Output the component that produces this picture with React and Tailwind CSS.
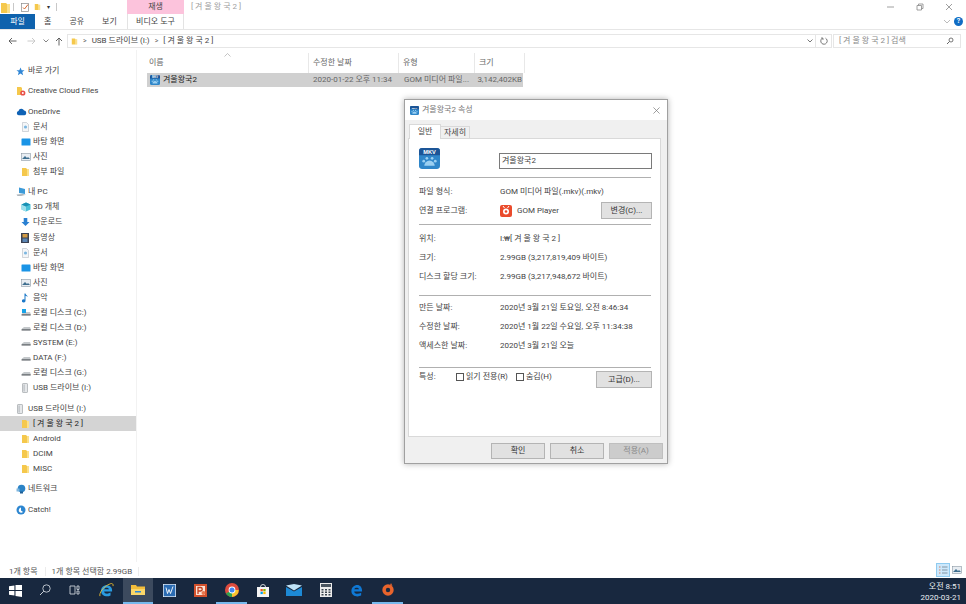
import React from 'react';

const FolderIcon = ({ className = 'w-[9px] h-[10px]' }) => (
  <svg viewBox="0 0 9 10" className={className}>
    <path d="M1 1h4l1 1v7H1z" fill="#f5c84c" />
    <path d="M6 2h2v7H6z" fill="#fbe08a" />
  </svg>
);

const DocIcon = () => (
  <svg viewBox="0 0 9 10" className="w-[9px] h-[10px]">
    <path d="M1.5.5h4l2 2v7h-6z" fill="#f4f6f8" stroke="#b5bcc4" strokeWidth=".6" />
    <circle cx="4.5" cy="5" r="1.6" fill="#7db7e0" />
  </svg>
);

const DesktopIcon = () => (
  <svg viewBox="0 0 10 8" className="w-[10px] h-[8px]">
    <rect x=".5" y=".5" width="9" height="7" rx=".6" fill="#1a94e6" />
  </svg>
);

const PictureIcon = () => (
  <svg viewBox="0 0 10 8" className="w-[10px] h-[8px]">
    <rect x=".3" y=".3" width="9.4" height="7.4" fill="#e8edf2" stroke="#7c8a96" strokeWidth=".5" />
    <path d="M1 6l3-3 2 2 1-1 2 2z" fill="#3f6f8f" />
  </svg>
);

const DriveIcon = ({ win }) => (
  <svg viewBox="0 0 10 8" className="w-[10px] h-[8px]">
    <path d="M1 4.5L3 3h6l.6 1.5V6.5H.6z" fill="#c4c8cb" />
    <path d="M.6 5.2h9v1.300h-9z" fill="#6a6e72" />
    {win && <rect x="1" y="0" width="4" height="4" fill="#18a3e8" />}
  </svg>
);

const UsbIcon = () => (
  <svg viewBox="0 0 8 10" className="w-[8px] h-[10px]">
    <rect x="1.5" y=".5" width="5" height="9" rx=".6" fill="#e6e8ea" stroke="#a0a5a9" strokeWidth=".7" />
    <rect x="2.6" y="1.5" width="1" height="7" fill="#b0b5b9" />
  </svg>
);

const MkvSmall = ({ className }) => (
  <svg viewBox="0 0 20 20" className={className}>
    <rect width="20" height="20" rx="3" fill="#2f86c9" />
    <path d="M0 7V3a3 3 0 0 1 3-3h14a3 3 0 0 1 3 3v4z" fill="#1c5597" />
    <text x="10" y="5.800" textAnchor="middle" fontSize="5.400" fontWeight="700" fill="#fff" fontFamily="Liberation Sans, sans-serif">MKV</text>
    <path d="M5 17a5 5 0 0 1 10 0z" fill="#9bd0f2" />
    <circle cx="4.500" cy="12.500" r="1.300" fill="#9bd0f2" />
    <circle cx="7.500" cy="9.800" r="1.300" fill="#9bd0f2" />
    <circle cx="12.500" cy="9.800" r="1.300" fill="#9bd0f2" />
    <circle cx="15.500" cy="12.500" r="1.300" fill="#9bd0f2" />
  </svg>
);

const StarIcon = () => (
  <svg viewBox="0 0 10 10" className="w-[9px] h-[9px]">
    <path d="M5 .5l1.300 3h3.200L7 5.600l.9 3.600L5 7.300 2.100 9.200 3 5.600.5 3.500h3.200z" fill="#2f86d6" />
  </svg>
);

const CloudIcon = () => (
  <svg viewBox="0 0 12 8" className="w-[11px] h-[8px]">
    <path d="M3 7.500a2.400 2.400 0 0 1-.3-4.700A3.300 3.300 0 0 1 8.800 2.400 2.600 2.600 0 0 1 9.300 7.500z" fill="#0f62b5" />
  </svg>
);

const CcIcon = () => (
  <svg viewBox="0 0 10 10" className="w-[10px] h-[10px]">
    <path d="M1 1h4l1 1v7H1z" fill="#f5c84c" />
    <circle cx="6.800" cy="7" r="2.600" fill="#e8504a" />
    <circle cx="6.800" cy="7" r="1" fill="#fff" />
  </svg>
);

const PcIcon = () => (
  <svg viewBox="0 0 11 10" className="w-[11px] h-[10px]">
    <path d="M3 .5l6 1.500v5L3 6z" fill="#3c9ad8" />
    <path d="M.5 7.500l6-.5 3.500.8-5 1.200H1.500z" fill="#aeb6bc" />
  </svg>
);

const CubeIcon = () => (
  <svg viewBox="0 0 10 10" className="w-[10px] h-[10px]">
    <path d="M5 .5l4.500 2v5L5 9.500.5 7.500v-5z" fill="#49c0d8" />
    <path d="M5 4.500v5L.5 7.500v-5z" fill="#9fe0ec" />
    <path d="M5 4.500L.5 2.500 5 .5l4.500 2z" fill="#1b91b5" />
  </svg>
);

const DownIcon = () => (
  <svg viewBox="0 0 10 10" className="w-[9px] h-[10px]">
    <path d="M3 .5h4V5h2.500L5 9.500.5 5H3z" fill="#2a80d2" />
  </svg>
);

const VideoIcon = () => (
  <svg viewBox="0 0 8 10" className="w-[8px] h-[10px]">
    <rect width="8" height="10" fill="#3b4252" />
    <rect x="1.500" y="1" width="5" height="3.500" fill="#d29b45" />
    <rect x="1.500" y="5.500" width="5" height="3.500" fill="#5b86b5" />
  </svg>
);

const MusicIcon = () => (
  <svg viewBox="0 0 8 10" className="w-[8px] h-[10px]">
    <path d="M3.500 .5h1c.2 1.500 2 2 2.500 3.500-.8-.8-1.600-1-2.500-1.200V7.800A1.800 1.600 0 1 1 3.500 6.500z" fill="#1b78c8" />
  </svg>
);

const NetIcon = () => (
  <svg viewBox="0 0 10 10" className="w-[10px] h-[10px]">
    <circle cx="5.500" cy="4.500" r="3.800" fill="#2b83c6" />
    <path d="M.5 4.500h3v3h-3z" fill="#7fb6de" />
    <path d="M4 7.500h3v2H4z" fill="#1f5f96" />
  </svg>
);

const CatchIcon = () => (
  <svg viewBox="0 0 10 10" className="w-[10px] h-[10px]">
    <circle cx="5" cy="5" r="4.500" fill="#2d86d0" />
    <path d="M5 2.500v3l2 1.500A2.600 2.600 0 0 1 3 6.500 3 3 0 0 1 5 2.500z" fill="#fff" />
  </svg>
);

const sidebarGroups = [
  [{ label: '바로 가기', icon: <StarIcon /> }],
  [{ label: 'Creative Cloud Files', icon: <CcIcon /> }],
  [
    { label: 'OneDrive', icon: <CloudIcon /> },
    { label: '문서', icon: <DocIcon />, child: true },
    { label: '바탕 화면', icon: <DesktopIcon />, child: true },
    { label: '사진', icon: <PictureIcon />, child: true },
    { label: '첨부 파일', icon: <FolderIcon />, child: true },
  ],
  [
    { label: '내 PC', icon: <PcIcon /> },
    { label: '3D 개체', icon: <CubeIcon />, child: true },
    { label: '다운로드', icon: <DownIcon />, child: true },
    { label: '동영상', icon: <VideoIcon />, child: true },
    { label: '문서', icon: <DocIcon />, child: true },
    { label: '바탕 화면', icon: <DesktopIcon />, child: true },
    { label: '사진', icon: <PictureIcon />, child: true },
    { label: '음악', icon: <MusicIcon />, child: true },
    { label: '로컬 디스크 (C:)', icon: <DriveIcon win />, child: true },
    { label: '로컬 디스크 (D:)', icon: <DriveIcon />, child: true },
    { label: 'SYSTEM (E:)', icon: <DriveIcon />, child: true },
    { label: 'DATA (F:)', icon: <DriveIcon />, child: true },
    { label: '로컬 디스크 (G:)', icon: <DriveIcon />, child: true },
    { label: 'USB 드라이브 (I:)', icon: <UsbIcon />, child: true },
  ],
  [
    { label: 'USB 드라이브 (I:)', icon: <UsbIcon /> },
    { label: '[ 겨 울 왕 국 2 ]', icon: <FolderIcon />, child: true, selected: true },
    { label: 'Android', icon: <FolderIcon />, child: true },
    { label: 'DCIM', icon: <FolderIcon />, child: true },
    { label: 'MISC', icon: <FolderIcon />, child: true },
  ],
  [{ label: '네트워크', icon: <NetIcon /> }],
  [{ label: 'Catch!', icon: <CatchIcon /> }],
];

const SidebarRow = ({ item }) => (
  <div className={`h-[15.1px] flex items-center ${item.child ? 'pl-[21px]' : 'pl-[16px]'} ${item.selected ? 'bg-[#d4d4d4] text-[#222]' : ''}`}>
    <span className="w-[12px] flex justify-start shrink-0">{item.icon}</span>
    <span className="whitespace-nowrap">{item.label}</span>
  </div>
);

const Sidebar = () => (
  <aside className="w-[137px] shrink-0 border-r border-[#f2f2f2] pt-[13.5px] flex flex-col gap-[5.2px]">
    {sidebarGroups.map((group, i) => (
      <div key={i}>
        {group.map((item, j) => <SidebarRow key={j} item={item} />)}
      </div>
    ))}
  </aside>
);

const TitleBar = () => (
  <div className="h-[14px] flex items-start shrink-0">
    <div className="flex items-center h-[14px] pl-[1px] w-[127px]">
      <svg viewBox="0 0 9 11" className="w-[9px] h-[11px]"><path d="M0 1h5l1 1v9H0z" fill="#f5c84c" /><path d="M6 2h3v9H6z" fill="#fbe08a" /></svg>
      <div className="w-px h-[8px] bg-[#c8c8c8] ml-[3px]" />
      <svg viewBox="0 0 8 9" className="w-[8px] h-[9px] ml-[7px]"><rect x=".5" y=".5" width="7" height="8" fill="#fff" stroke="#8a8a8a" strokeWidth=".7" /><path d="M2 4.500l1.500 1.500L7 1.500" fill="none" stroke="#d8672b" /></svg>
      <FolderIcon className="w-[7px] h-[10px] ml-[5px]" />
      <span className="ml-[6px] text-[6px] text-[#333]">▾</span>
      <div className="w-px h-[8px] bg-[#c8c8c8] ml-[6px]" />
    </div>
    <div className="w-[57px] h-[14px] bg-[#fcc3dc] flex items-center justify-center text-[#444] shrink-0">재생</div>
    <div className="ml-[7px] h-[14px] flex items-center text-[#a0a0a0] whitespace-nowrap">[ 겨 울 왕 국 2 ]</div>
    <div className="ml-auto h-[14px] flex items-center text-[#777]">
      <svg viewBox="0 0 8 8" className="w-[8px] h-[8px]"><path d="M0 4h7" stroke="#888" strokeWidth=".8" /></svg>
      <svg viewBox="0 0 8 8" className="w-[8px] h-[8px] ml-[21px]"><path d="M1 2.500h4.500V7H1zM2.500 2.500V1H7v4.500H5.500" fill="none" stroke="#888" strokeWidth=".8" /></svg>
      <svg viewBox="0 0 8 8" className="w-[8px] h-[8px] ml-[21px] mr-[13px]"><path d="M1 1l6 6M7 1L1 7" stroke="#888" strokeWidth=".8" /></svg>
    </div>
  </div>
);

const Ribbon = () => (
  <div className="h-[16px] flex items-stretch border-b border-[#e6e6e6] shrink-0">
    <div className="w-[35px] h-[15px] bg-[#0f62ad] text-white flex items-center justify-center">파일</div>
    <div className="w-[92px] flex items-center pl-[9px] gap-[18px] text-[#444]">
      <span>홈</span><span>공유</span><span>보기</span>
    </div>
    <div className="w-[57px] bg-white border-x border-[#e3e3e3] flex items-center justify-center text-[#444] whitespace-nowrap">비디오 도구</div>
    <div className="ml-auto flex items-center pr-[2px]">
      <svg viewBox="0 0 8 5" className="w-[8px] h-[5px]"><path d="M1 1l3 3 3-3" fill="none" stroke="#aaa" strokeWidth=".8" /></svg>
      <div className="ml-[3px] mr-[1px] w-[9px] h-[9px] rounded-full bg-[#0f6cc4] text-white text-[7px] leading-[9px] text-center font-bold">?</div>
    </div>
  </div>
);

const NavBar = () => (
  <div className="h-[20px] pt-[4px] flex items-start shrink-0">
    <div className="w-[67px] h-[14px] flex items-center pl-[8px]">
      <svg viewBox="0 0 9 8" className="w-[9px] h-[8px]"><path d="M8.500 4H1M4 1L1 4l3 3" fill="none" stroke="#555" strokeWidth=".9" /></svg>
      <svg viewBox="0 0 9 8" className="w-[9px] h-[8px] ml-[10px]"><path d="M.5 4H8M5 1l3 3-3 3" fill="none" stroke="#c4c4c4" strokeWidth=".9" /></svg>
      <svg viewBox="0 0 6 4" className="w-[6px] h-[4px] ml-[7px]"><path d="M.5.5L3 3 5.500.5" fill="none" stroke="#666" strokeWidth=".8" /></svg>
      <svg viewBox="0 0 8 9" className="w-[8px] h-[9px] ml-[6px]"><path d="M4 8.500V1M1 4l3-3 3 3" fill="none" stroke="#555" strokeWidth=".9" /></svg>
    </div>
    <div className="w-[749px] h-[14px] border border-[#e6e6e6] flex items-center pl-[3px]">
      <FolderIcon className="w-[7px] h-[9px]" />
      <span className="ml-[5px] text-[#666] text-[7px]">&gt;</span>
      <span className="ml-[5px] whitespace-nowrap">USB 드라이브 (I:)</span>
      <span className="ml-[5px] text-[#666] text-[7px]">&gt;</span>
      <span className="ml-[5px] whitespace-nowrap">[ 겨 울 왕 국 2 ]</span>
      <svg viewBox="0 0 6 4" className="w-[6px] h-[4px] ml-auto mr-[2px]"><path d="M.5.5L3 3 5.500.5" fill="none" stroke="#555" strokeWidth=".8" /></svg>
    </div>
    <div className="w-[16px] h-[14px] border-y border-r border-[#e6e6e6] flex items-center justify-center">
      <svg viewBox="0 0 8 8" className="w-[8px] h-[8px]"><path d="M2 1.500A3.200 3.200 0 1 0 5.500 1.200M2 .2v1.800h1.800" fill="none" stroke="#555" strokeWidth=".8" /></svg>
    </div>
    <div className="w-[128px] h-[14px] border border-[#e6e6e6] ml-[1px] flex items-center pl-[5px] pr-[6px] text-[#8a8a8a]">
      <span className="whitespace-nowrap">[ 겨 울 왕 국 2 ] 검색</span>
      <svg viewBox="0 0 8 8" className="w-[8px] h-[8px] ml-auto"><circle cx="5" cy="3" r="2" fill="none" stroke="#555" strokeWidth=".8" /><path d="M3.500 4.500L1 7" stroke="#555" strokeWidth=".9" /></svg>
    </div>
  </div>
);

const columns = [
  { label: '이름', cls: 'w-[162px] pl-[2px]' },
  { label: '수정한 날짜', cls: 'w-[90px] pl-[4px]' },
  { label: '유형', cls: 'w-[76px] pl-[4px]' },
  { label: '크기', cls: 'w-[50px] pl-[4px]' },
];

const FileList = () => (
  <div className="flex-1 pl-[10px] relative">
    <div className="h-[23px] flex items-stretch text-[#666]">
      {columns.map((col) => (
        <div key={col.label} className={`${col.cls} mt-[3px] border-r border-[#e8e8e8] flex items-center`}>
          <span>{col.label}</span>
        </div>
      ))}
    </div>
    <svg viewBox="0 0 7 4" className="w-[7px] h-[4px] absolute left-[87px] top-[3px]"><path d="M.5 3.500L3.500 .5l3 3" fill="none" stroke="#aaa" strokeWidth=".7" /></svg>
    <div className="w-[376px] h-[14px] bg-[#d0d0d0] flex items-center">
      <div className="w-[162px] flex items-center pl-[3px] text-[#222]">
        <MkvSmall className="w-[10px] h-[10px] mr-[3px]" />
        <span>겨울왕국2</span>
      </div>
      <div className="w-[90px] pl-[4px] text-[#666] whitespace-nowrap">2020-01-22 오후 11:34</div>
      <div className="w-[76px] pl-[5px] text-[#666] whitespace-nowrap">GOM 미디어 파일...</div>
      <div className="w-[47px] text-right text-[#666]">3,142,402KB</div>
    </div>
  </div>
);

const StatusBar = () => (
  <div className="h-[16px] flex items-center pl-[9px] text-[#555] shrink-0">
    <div className="flex items-center mt-[3px]">
      <span className="whitespace-nowrap">1개 항목</span>
      <div className="w-px h-[9px] bg-[#ececec] ml-[7px]" />
      <span className="ml-[6px] whitespace-nowrap">1개 항목 선택함 2.99GB</span>
      <div className="w-px h-[9px] bg-[#ececec] ml-[6px]" />
    </div>
    <div className="ml-auto flex items-center mr-[2px]">
      <div className="w-[14px] h-[14px] bg-[#cde8fb] border border-[#8fcbf0] flex items-center justify-center">
        <svg viewBox="0 0 10 10" className="w-[10px] h-[10px]"><path d="M1 2h1.500M1 5h1.500M1 8h1.500" stroke="#d0806a" strokeWidth="1.200" /><path d="M4 2h5.500M4 5h5.500M4 8h5.500" stroke="#7a8c9a" strokeWidth=".9" /></svg>
      </div>
      <div className="w-[14px] h-[14px] flex items-center justify-center">
        <PictureIcon />
      </div>
    </div>
  </div>
);

const taskbarIcons = [
  { w: 'w-[30px]', icon: <svg viewBox="0 0 12 12" className="w-[13px] h-[13px]"><path d="M6 1v4.500H12V1zM0 2v3.500h5V1.300zM0 6.500V10l5 .7V6.500zM6 6.500v4.500l6 .9V6.500z" fill="#fff" /></svg> },
  { w: 'w-[30px]', icon: <svg viewBox="0 0 12 12" className="w-[12px] h-[12px]"><circle cx="7.500" cy="4.500" r="3.700" fill="none" stroke="#c9d0d8" strokeWidth=".9" /><path d="M4.800 7.200L1 11" stroke="#c9d0d8" /></svg> },
  { w: 'w-[30px]', icon: <svg viewBox="0 0 12 12" className="w-[12px] h-[12px]"><path d="M1 2h5v8H1zM8 2h2v3.500H8zM8 7h2v3H8z" fill="none" stroke="#c9d0d8" strokeWidth=".9" /></svg> },
  { w: 'w-[33px]', icon: <svg viewBox="0 0 16 16" className="w-[15px] h-[15px]"><path d="M14 9H5.500c.2 2.500 3.800 3.200 6.800 1.200v3c-4 2-9.500.8-10-4.200C1.900 5 4.500 2.500 8 2.500c4 0 6.300 2.500 6 6.500zM5.500 6.700h5.200C10.500 4.500 6 4.300 5.500 6.700z" fill="#2a9be0" /><path d="M1 14C0 11 4 4 12 .8c2-.7 3.500.2 3 2.500" fill="none" stroke="#f4c430" strokeWidth=".9" /></svg> },
  { w: 'w-[30px]', active: true, running: true, icon: <svg viewBox="0 0 14 12" className="w-[14px] h-[12px]"><path d="M0 1h5l1 1.500h8V11H0z" fill="#f3bd3a" /><path d="M0 5h14v6H0z" fill="#fbd769" /><path d="M4 7h6v1.500H4z" fill="#2b88d8" /></svg> },
  { w: 'w-[32px]', icon: <svg viewBox="0 0 13 13" className="w-[13px] h-[13px]"><rect width="13" height="13" fill="#e8eff6" /><rect x=".7" y=".7" width="11.600" height="11.600" fill="#2b6cb3" /><path d="M3 3.500l1.500 6 1.500-4 1.500 4 2.500-7" fill="none" stroke="#fff" strokeWidth=".9" /></svg> },
  { w: 'w-[31px]', icon: <svg viewBox="0 0 13 13" className="w-[13px] h-[13px]"><rect width="13" height="13" fill="#d2512d" /><rect x="2" y="2" width="9" height="9" fill="#fbe3d6" /><path d="M4 10V3.500h2.500a1.700 1.700 0 0 1 0 3.500H4" fill="none" stroke="#c43e1c" strokeWidth="1.300" /><circle cx="9.500" cy="9" r="2" fill="#e9784f" /></svg> },
  { w: 'w-[31px]', running: true, icon: <svg viewBox="0 0 14 14" className="w-[14px] h-[14px]"><circle cx="7" cy="7" r="7" fill="#dd4b3e" /><path d="M7 7L1 10.500A7 7 0 0 0 7 14z" fill="#2ea44f" /><path d="M7 7h6.700A7 7 0 0 1 7 14z" fill="#f7c32e" /><circle cx="7" cy="7" r="3.400" fill="#fff" /><circle cx="7" cy="7" r="2.500" fill="#4285f4" /></svg> },
  { w: 'w-[31px]', icon: <svg viewBox="0 0 14 14" className="w-[14px] h-[14px]"><path d="M4.500 4a2.500 2.500 0 0 1 5 0" fill="none" stroke="#e8e8e8" strokeWidth=".9" /><rect x="1" y="4" width="12" height="10" fill="#f5f5f5" /><rect x="4.500" y="6" width="2.300" height="2.300" fill="#f25022" /><rect x="7.300" y="6" width="2.300" height="2.300" fill="#7fba00" /><rect x="4.500" y="8.800" width="2.300" height="2.300" fill="#00a4ef" /><rect x="7.300" y="8.800" width="2.300" height="2.300" fill="#ffb900" /></svg> },
  { w: 'w-[32px]', icon: <svg viewBox="0 0 16 12" className="w-[16px] h-[12px]"><path d="M0 3l8 4.500L16 3v9H0z" fill="#1d8ad6" /><path d="M0 1.500L8 0l8 1.500L8 6.500z" fill="#bfe3f8" /></svg> },
  { w: 'w-[31px]', icon: <svg viewBox="0 0 12 14" className="w-[12px] h-[14px]"><rect width="12" height="14" fill="#ececec" /><rect x="1" y="1" width="10" height="3" fill="#4a5560" /><path d="M1.500 6h2v1.500h-2zM5 6h2v1.500H5zM8.500 6h2v1.500h-2zM1.500 8.500h2V10h-2zM5 8.500h2V10H5zM8.500 8.500h2V10h-2zM1.500 11h2v1.500h-2zM5 11h2v1.500H5zM8.500 11h2v1.500h-2z" fill="#39434d" /></svg> },
  { w: 'w-[31px]', icon: <svg viewBox="0 0 14 14" className="w-[13px] h-[13px]"><path d="M13 8H4.500c.2 2.700 4 3.300 7.500 1.500v3C7.500 14.500 1.500 13 1.500 7.500 1.500 3.500 4.500 1 7.800 1 11 1 13.200 3.500 13 8zM4.700 5.700h5C9.500 3.600 5.200 3.400 4.700 5.700z" fill="#0f78d4" /></svg> },
  { w: 'w-[31px]', running: true, icon: <svg viewBox="0 0 14 14" className="w-[14px] h-[14px]"><circle cx="7" cy="7" r="5.700" fill="#e8642c" /><circle cx="7" cy="7" r="2.200" fill="#1a2a40" /><path d="M10 0l1.500 3-2.500-.8z" fill="#e8642c" /></svg> },
];

const Taskbar = () => (
  <div className="h-[26px] bg-[#18283f] flex items-stretch shrink-0 text-white">
    {taskbarIcons.map((item, i) => (
      <div
        key={i}
        className={`${item.w} ${item.active ? 'bg-[#3c4a5e]' : ''} h-full flex items-center justify-center border-b-2 ${item.running ? 'border-[#76b9ed]' : 'border-transparent'}`}
      >
        {item.icon}
      </div>
    ))}
    <div className="ml-auto flex flex-col items-end justify-center pt-[2px] pr-[5px] leading-[11px] text-[#e8edf2]">
      <span className="whitespace-nowrap">오전 8:51</span>
      <span className="whitespace-nowrap">2020-03-21</span>
    </div>
  </div>
);

const Hr = ({ className = '' }) => <div className={`h-px bg-[#b0b0b0] mr-[1px] ${className}`} />;

const InfoRow = ({ label, children, className = '' }) => (
  <div className={`flex items-center h-[19px] ${className}`}>
    <span className="w-[81px] shrink-0 whitespace-nowrap">{label}</span>
    <span className="whitespace-nowrap">{children}</span>
  </div>
);

const WinButton = ({ children, className = '' }) => (
  <button className={`h-[17px] bg-[#e1e1e1] border border-[#b4b4b4] text-[8px] text-[#333] flex items-center justify-center ${className}`}>
    {children}
  </button>
);

const Checkbox = ({ label, className = '' }) => (
  <label className={`flex items-center ${className}`}>
    <span className="w-[8px] h-[8px] bg-white border border-[#555] mr-[2px]" />
    <span className="whitespace-nowrap">{label}</span>
  </label>
);

const PropertiesDialog = () => (
  <div className="absolute left-[404px] top-[99px] w-[264px] h-[365px] bg-[#f0f0f0] border border-[#a0a0a0] shadow-[0_0_6px_rgba(0,0,0,0.3)] flex flex-col text-[#444]">
    <div className="h-[20px] bg-white flex items-center pl-[5px] pr-[7px] shrink-0">
      <MkvSmall className="w-[9px] h-[9px] mr-[3px]" />
      <span className="text-[#777]">겨울왕국2 속성</span>
      <svg viewBox="0 0 8 8" className="w-[7px] h-[7px] ml-auto"><path d="M.5.5l7 7M7.500.5l-7 7" stroke="#777" strokeWidth=".8" /></svg>
    </div>
    <div className="flex items-end h-[18px] pl-[4px] shrink-0">
      <div className="w-[32px] h-[15px] bg-white border-x border-t border-[#d9d9d9] flex items-center justify-center relative top-px z-10">일반</div>
      <div className="w-[29px] h-[12px] bg-[#f0f0f0] border-r border-t border-[#d9d9d9] flex items-center justify-center">자세히</div>
    </div>
    <div className="ml-[3px] w-[253px] h-[299px] bg-white border border-[#d9d9d9] pl-[10px] pr-[8px] shrink-0">
      <div className="flex items-start h-[38px] pt-[9px]">
        <MkvSmall className="w-[21px] h-[21px]" />
        <div className="ml-[59px] mt-[5px] w-[153px] h-[16px] border border-[#7a7a7a] flex items-center pl-[2px]">겨울왕국2</div>
      </div>
      <Hr />
      <InfoRow label="파일 형식:" className="mt-[4px]">GOM 미디어 파일(.mkv)(.mkv)</InfoRow>
      <div className="flex items-center h-[19px]">
        <span className="w-[81px] shrink-0 whitespace-nowrap">연결 프로그램:</span>
        <svg viewBox="0 0 12 12" className="w-[12px] h-[12px] mr-[5px]"><rect width="12" height="12" rx="2" fill="#ea4b2c" /><circle cx="6" cy="6.500" r="3" fill="#fff" /><circle cx="6" cy="6.500" r="1.300" fill="#ea4b2c" /><path d="M3 1l1.500 2M9 1L7.500 3" stroke="#fff" /></svg>
        <span className="whitespace-nowrap">GOM Player</span>
        <WinButton className="w-[51px] ml-auto">변경(C)...</WinButton>
      </div>
      <Hr className="mt-[4px]" />
      <InfoRow label="위치:" className="mt-[4px]">I:₩[ 겨 울 왕 국 2 ]</InfoRow>
      <InfoRow label="크기:">2.99GB (3,217,819,409 바이트)</InfoRow>
      <InfoRow label="디스크 할당 크기:">2.99GB (3,217,948,672 바이트)</InfoRow>
      <Hr className="mt-[9px]" />
      <InfoRow label="만든 날짜:" className="mt-[2px]">2020년 3월 21일 토요일, 오전 8:46:34</InfoRow>
      <InfoRow label="수정한 날짜:">2020년 1월 22일 수요일, 오후 11:34:38</InfoRow>
      <InfoRow label="액세스한 날짜:">2020년 3월 21일 오늘</InfoRow>
      <Hr className="mt-[12px]" />
      <div className="flex items-start mt-[3px] h-[17px]">
        <span className="w-[37px] mt-[2px]">특성:</span>
        <Checkbox label="읽기 전용(R)" className="mt-[2px]" />
        <Checkbox label="숨김(H)" className="ml-[8px] mt-[2px]" />
        <WinButton className="w-[56px] ml-auto">고급(D)...</WinButton>
      </div>
    </div>
    <div className="flex justify-end gap-[5px] pr-[4px] pt-[6px]">
      <WinButton className="w-[54px] !h-[16px]">확인</WinButton>
      <WinButton className="w-[54px] !h-[16px]">취소</WinButton>
      <button className="w-[54px] h-[16px] bg-[#cccccc] border border-[#bfbfbf] text-[#8a8a8a] text-[8px]">적용(A)</button>
    </div>
  </div>
);

export default function App() {
  return (
    <div className="relative w-[966px] h-[604px] overflow-hidden bg-white flex flex-col text-[8px] leading-none text-[#444] font-['Roboto','Noto_Sans_CJK_KR',sans-serif]">
      <TitleBar />
      <Ribbon />
      <NavBar />
      <div className="flex flex-1 min-h-0">
        <Sidebar />
        <FileList />
      </div>
      <StatusBar />
      <Taskbar />
      <PropertiesDialog />
    </div>
  );
}
